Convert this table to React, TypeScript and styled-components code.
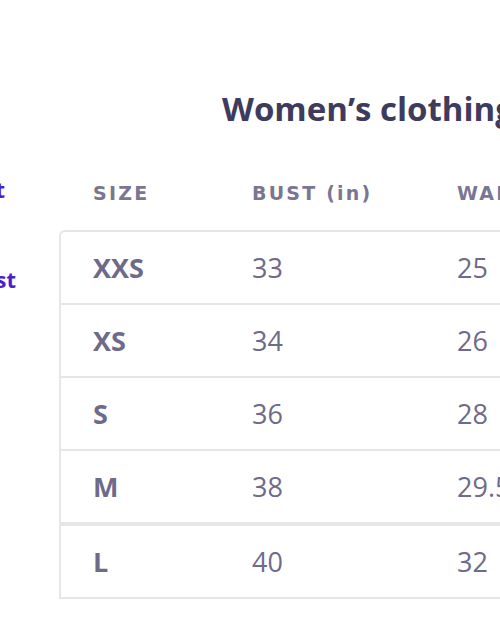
import React from "react";
import styled, { createGlobalStyle } from "styled-components";

const Global = createGlobalStyle`
  html, body { margin: 0; padding: 0; background: #ffffff; }
  body { overflow: hidden; width: 500px; height: 641px; }
`;

const Page = styled.div`
  width: 500px;
  height: 641px;
  overflow: hidden;
  display: flex;
  flex-direction: column;
`;

const Title = styled.h1`
  margin: 0;
  padding: 86px 0 0 222px;
  font-family: "Open Sans", sans-serif;
  font-weight: 700;
  font-size: 33px;
  line-height: 46px;
  color: #3e3b5c;
  white-space: nowrap;
`;

const Main = styled.div`
  display: flex;
  margin-top: 38px;
`;

const Sidebar = styled.nav`
  width: 16px;
  flex: none;
  display: flex;
  flex-direction: column;
  align-items: flex-start;
  margin-right: 43px;
`;

const SideLink = styled.div<{ $top: number; $w: number }>`
  margin-top: ${(p) => p.$top}px;
  display: flex;
  justify-content: flex-end;
  width: ${(p) => p.$w}px;
  white-space: nowrap;
  font-family: "Open Sans", sans-serif;
  font-weight: 700;
  font-size: 22px;
  line-height: 28px;
  color: #4b1fcc;
`;

const TableArea = styled.div`
  flex: none;
  width: 600px;
  display: flex;
  flex-direction: column;
`;

const HeadRow = styled.div`
  display: flex;
  padding-left: 34px;
  height: 46px;
  align-items: center;
`;

const HeadCell = styled.div<{ $w: number }>`
  width: ${(p) => p.$w}px;
  flex: none;
  font-family: "DejaVu Sans", sans-serif;
  font-weight: 700;
  font-size: 19px;
  letter-spacing: 2.2px;
  color: #7a7692;
  white-space: nowrap;
`;

const Table = styled.div`
  margin-top: 14px;
  border: 2px solid #e6e6e8;
  border-right: none;
  border-radius: 6px 0 0 0;
  display: flex;
  flex-direction: column;
`;

const Row = styled.div<{ $last?: boolean; $thick?: boolean }>`
  display: flex;
  align-items: center;
  height: 71px;
  padding-left: 32px;
  border-bottom: ${(p) => (p.$last ? "none" : p.$thick ? "4px solid #e6e6e8" : "2px solid #e6e6e8")};
`;

const Cell = styled.div<{ $w: number; $strong?: boolean }>`
  width: ${(p) => p.$w}px;
  flex: none;
  font-family: "Open Sans", sans-serif;
  font-weight: ${(p) => (p.$strong ? 700 : 400)};
  font-size: 27px;
  color: #6e6a8a;
  white-space: nowrap;
`;

const rows = [
  ["XXS", "33", "25"],
  ["XS", "34", "26"],
  ["S", "36", "28"],
  ["M", "38", "29.5"],
  ["L", "40", "32"],
];

const widths = [159, 205, 205];

export default function App() {
  return (
    <Page>
      <Global />
      <Title>Women’s clothing size chart</Title>
      <Main>
        <Sidebar>
          <SideLink $top={5} $w={5}>Size chart</SideLink>
          <SideLink $top={62} $w={16}>How to measure bust</SideLink>
        </Sidebar>
        <TableArea>
          <HeadRow>
            <HeadCell $w={widths[0]}>SIZE</HeadCell>
            <HeadCell $w={widths[1]}>BUST (in)</HeadCell>
            <HeadCell $w={widths[2]}>WAIST (in)</HeadCell>
          </HeadRow>
          <Table>
            {rows.map((r, i) => (
              <Row key={r[0]} $last={i === rows.length - 1} $thick={i === 3}>
                <Cell $w={widths[0]} $strong>{r[0]}</Cell>
                <Cell $w={widths[1]}>{r[1]}</Cell>
                <Cell $w={widths[2]}>{r[2]}</Cell>
              </Row>
            ))}
          </Table>
        </TableArea>
      </Main>
    </Page>
  );
}
